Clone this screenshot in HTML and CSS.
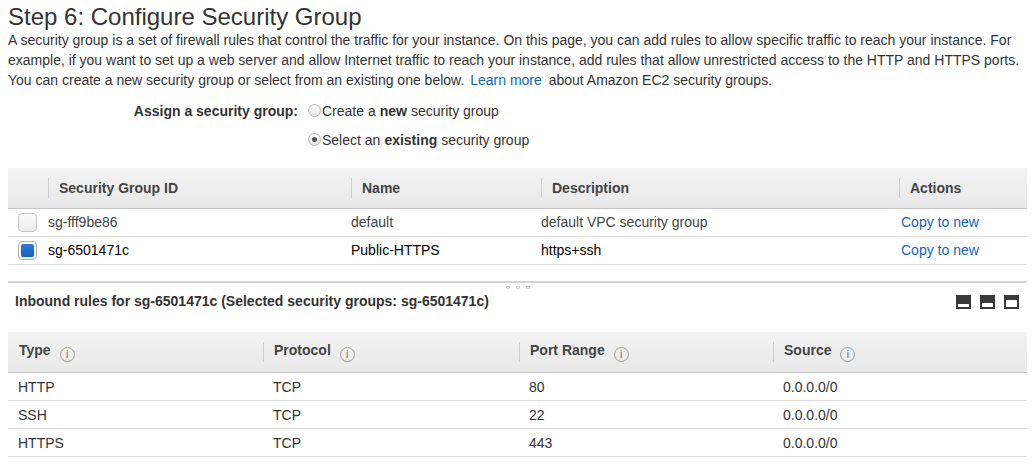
FILE: index.html
```html
<!DOCTYPE html>
<html lang="en">
<head>
<meta charset="utf-8">
<title>Step 6: Configure Security Group</title>
<link rel="stylesheet" href="styles.css">
</head>
<body>
<div class="page">
  <h1 class="title">Step 6: Configure Security Group</h1>
  <p class="intro">A security group is a set of firewall rules that control the traffic for your instance. On this page, you can add rules to allow specific traffic to reach your instance. For example, if you want to set up a web server and allow Internet traffic to reach your instance, add rules that allow unrestricted access to the HTTP and HTTPS ports. You can create a new security group or select from an existing one below. <a class="link learn" href="#">Learn more</a> about Amazon EC2 security groups.</p>

  <div class="assign">
    <div class="assign-label">Assign a security group:</div>
    <label class="radio-opt"><span class="radio"></span>Create a <b>new</b> security group</label>
    <div></div>
    <label class="radio-opt"><span class="radio checked"></span>Select an <b>existing</b> security group</label>
  </div>

  <table class="grid sg-table">
    <colgroup>
      <col class="c-check"><col class="c-id"><col class="c-name"><col class="c-desc"><col class="c-act">
    </colgroup>
    <thead>
      <tr>
        <th class="nosep"></th>
        <th>Security Group ID</th>
        <th>Name</th>
        <th>Description</th>
        <th>Actions</th>
      </tr>
    </thead>
    <tbody>
      <tr class="muted">
        <td class="check-cell"><span class="checkbox"></span></td>
        <td>sg-fff9be86</td>
        <td>default</td>
        <td>default VPC security group</td>
        <td class="act"><a class="link" href="#">Copy to new</a></td>
      </tr>
      <tr class="selected">
        <td class="check-cell"><span class="checkbox checked"></span></td>
        <td>sg-6501471c</td>
        <td>Public-HTTPS</td>
        <td>https+ssh</td>
        <td class="act"><a class="link" href="#">Copy to new</a></td>
      </tr>
    </tbody>
  </table>

  <div class="inbound">
    <div class="grip"><span></span><span></span><span></span></div>
    <div class="inbound-bar">
      <div class="inbound-title">Inbound rules for sg-6501471c (Selected security groups: sg-6501471c)</div>
      <div class="view-icons">
        <svg width="15" height="14" viewBox="0 0 15 14"><rect width="15" height="14" fill="#3a3a3a"/><rect x="2" y="9" width="11" height="3" fill="#fff"/></svg>
        <svg width="15" height="14" viewBox="0 0 15 14"><rect width="15" height="14" fill="#3a3a3a"/><rect x="2" y="8" width="11" height="4" fill="#fff"/></svg>
        <svg width="15" height="14" viewBox="0 0 15 14"><rect width="15" height="14" fill="#3a3a3a"/><rect x="2" y="5" width="11" height="7" fill="#fff"/></svg>
      </div>
    </div>
  </div>

  <table class="grid rules-table">
    <colgroup>
      <col class="r1"><col class="r2"><col class="r3"><col class="r4">
    </colgroup>
    <thead>
      <tr>
        <th class="nosep">Type <span class="info">i</span></th>
        <th>Protocol <span class="info">i</span></th>
        <th>Port Range <span class="info">i</span></th>
        <th>Source <span class="info">i</span></th>
      </tr>
    </thead>
    <tbody>
      <tr><td>HTTP</td><td>TCP</td><td>80</td><td>0.0.0.0/0</td></tr>
      <tr><td>SSH</td><td>TCP</td><td>22</td><td>0.0.0.0/0</td></tr>
      <tr><td>HTTPS</td><td>TCP</td><td>443</td><td>0.0.0.0/0</td></tr>
    </tbody>
  </table>
</div>
</body>
</html>
```

FILE: styles.css
```css
* { box-sizing: border-box; }

html, body {
  margin: 0;
  padding: 0;
  background: #fff;
}

body {
  font-family: "Liberation Sans", Arial, sans-serif;
  font-size: 14px;
  color: #333;
}

.page {
  padding: 4px 8px 0 8px;
}

.title {
  margin: 0;
  font-size: 24px;
  line-height: 26px;
  font-weight: normal;
  color: #333;
}

.intro {
  margin: 0;
  font-size: 14px;
  line-height: 20px;
  color: #333;
}

.link {
  color: #1166bb;
  text-decoration: none;
}

.learn {
  margin-left: 2px;
  margin-right: 3px;
}

.assign {
  display: grid;
  grid-template-columns: 290px auto;
  grid-auto-rows: 29px;
  column-gap: 10px;
  margin-top: 6px;
  align-items: center;
}

.assign-label {
  text-align: right;
  font-weight: bold;
  color: #333;
}

.radio-opt {
  display: flex;
  align-items: center;
  color: #333;
}

.radio-opt b {
  margin: 0 4px;
}

.radio {
  width: 13px;
  height: 13px;
  border: 1px solid #b5b5b5;
  border-radius: 50%;
  background: linear-gradient(#fdfdfd, #e6e6e6);
  margin-right: 1px;
  display: inline-flex;
  align-items: center;
  justify-content: center;
}

.radio.checked::after {
  content: "";
  width: 5px;
  height: 5px;
  border-radius: 50%;
  background: #555;
}

.grid {
  width: 100%;
  border-collapse: collapse;
  table-layout: fixed;
}

.sg-table {
  margin-top: 14px;
}

.grid thead tr {
  background: linear-gradient(#f3f3f3, #e8e8e8);
}

.grid th {
  height: 40px;
  padding: 0 0 0 11px;
  text-align: left;
  font-weight: bold;
  color: #444;
  border-bottom: 1px solid #c6c6c6;
  background-image: linear-gradient(#cfcfcf, #cfcfcf);
  background-repeat: no-repeat;
  background-size: 1px 20px;
  background-position: 0 center;
  white-space: nowrap;
}

.grid th.nosep {
  background-image: none;
}

.grid td {
  height: 28px;
  padding: 0;
  border-bottom: 1px solid #dcdcdc;
  white-space: nowrap;
}

.c-check { width: 40px; }
.c-id { width: 303px; }
.c-name { width: 190px; }
.c-desc { width: 358px; }
.c-act { width: 128px; }

.r1 { width: 255px; }
.r2 { width: 256px; }
.r3 { width: 254px; }
.r4 { width: 254px; }

.sg-table td.act {
  padding-left: 2px;
}

.sg-table tr.muted td {
  color: #444;
}

.sg-table tr.selected td {
  color: #000;
}

.check-cell {
  padding-left: 10px !important;
}

.checkbox {
  display: flex;
  align-items: center;
  justify-content: center;
  width: 19px;
  height: 19px;
  border: 1px solid #c4c4c4;
  border-radius: 4px;
  background: linear-gradient(#fafafa, #ececec);
}

.checkbox.checked {
  border-color: #b0b0b0;
}

.checkbox.checked::after {
  content: "";
  width: 13px;
  height: 13px;
  border-radius: 2px;
  background: linear-gradient(#2a7ad6, #1761bd);
}

.inbound {
  position: relative;
  margin-top: 16px;
  border-top: 2px solid #d3d3d3;
}

.grip {
  position: absolute;
  top: 3px;
  left: 50%;
  transform: translateX(-50%);
  display: flex;
  gap: 6px;
}

.grip span {
  width: 4px;
  height: 3px;
  border: 1px solid #c8c8c8;
  border-radius: 1px;
}

.inbound-bar {
  height: 36px;
  display: flex;
  align-items: center;
  justify-content: space-between;
  padding: 0 8px 0 7px;
}

.inbound-title {
  font-weight: bold;
  color: #333;
}

.view-icons {
  display: flex;
  gap: 9px;
  padding-top: 2px;
}

.view-icons svg {
  display: block;
}

.rules-table {
  margin-top: 13px;
}

.rules-table th {
  height: 41px;
}

.rules-table td {
  padding-left: 10px;
  color: #333;
}

.info {
  display: inline-flex;
  align-items: center;
  justify-content: center;
  width: 15px;
  height: 15px;
  margin-left: 5px;
  border: 1px solid #999;
  border-radius: 50%;
  font-family: "DejaVu Sans", sans-serif;
  font-size: 10px;
  font-weight: normal;
  color: #666;
  vertical-align: -3px;
}
```
